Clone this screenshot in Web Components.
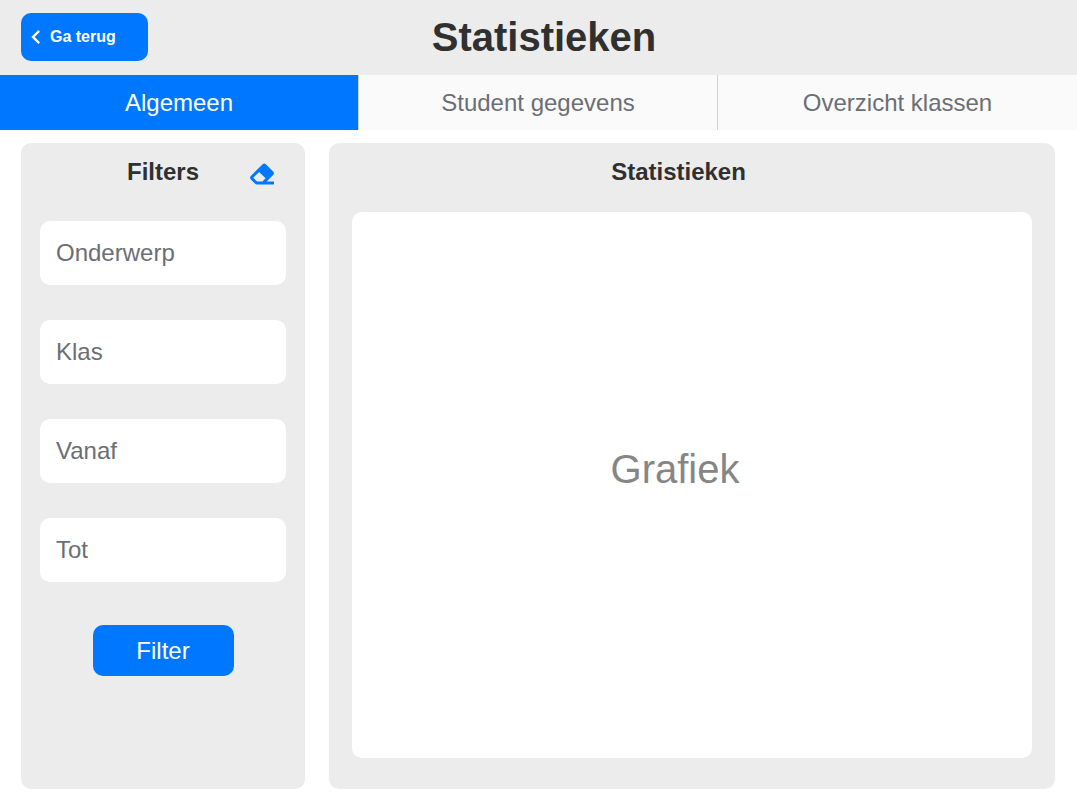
<!DOCTYPE html>
<html lang="nl">
<head>
<meta charset="utf-8">
<meta name="viewport" content="width=device-width, initial-scale=1">
<title>Statistieken</title>
<style>
  :root {
    --blue: #0077ff;
    --panel: #ececec;
    --ink: #303030;
    --muted: #6b6e74;
    --radius: 10px;
  }
  body {
    margin: 0;
    background: #fff;
    color: var(--ink);
    font-family: "Liberation Sans", Arial, sans-serif;
    font-size: 24px;
    line-height: 28px;
  }
</style>
</head>
<body>
<stats-page></stats-page>

<template id="stats-page">
  <style>
    :host { display: flex; flex-direction: column; min-height: 100vh; }
    main {
      flex: 1;
      display: grid;
      grid-template-columns: 284px 1fr;
      gap: 24px;
      padding: 13px 22px 19px 21px;
    }
  </style>
  <page-header>Statistieken</page-header>
  <tab-bar>
    <tab-item active>Algemeen</tab-item>
    <tab-item>Student gegevens</tab-item>
    <tab-item>Overzicht klassen</tab-item>
  </tab-bar>
  <main>
    <filter-panel>
      <filter-field label="Onderwerp"></filter-field>
      <filter-field label="Klas"></filter-field>
      <filter-field label="Vanaf"></filter-field>
      <filter-field label="Tot"></filter-field>
    </filter-panel>
    <chart-panel heading="Statistieken">Grafiek</chart-panel>
  </main>
</template>

<template id="page-header">
  <style>
    :host { display: block; background: var(--panel); }
    header {
      display: grid;
      grid-template-columns: 127px 1fr 127px;
      padding: 13px 10px 14px 21px;
    }
    h1 { margin: 0; font-size: 40px; line-height: 48px; text-align: center; }
    button {
      display: flex;
      align-items: center;
      height: 48px;
      padding: 0 1px;
      border: 0;
      border-radius: var(--radius);
      background: var(--blue);
      color: #fff;
      font: bold 16px/20px "Liberation Sans", Arial, sans-serif;
      cursor: pointer;
    }
    svg { width: 28px; height: 28px; fill: currentColor; }
  </style>
  <header>
    <button type="button">
      <svg viewBox="0 0 24 24" aria-hidden="true"><path d="M15.41 7.41L14 6l-6 6 6 6 1.41-1.41L10.83 12z"/></svg>
      <span>Ga terug</span>
    </button>
    <h1><slot></slot></h1>
  </header>
</template>

<template id="tab-bar">
  <style>
    nav { display: grid; grid-template-columns: repeat(3, 1fr); }
    :host { display: block; background: #fafafa; }
  </style>
  <nav><slot></slot></nav>
</template>

<template id="tab-item">
  <style>
    :host { display: block; border-right: 1px solid #d2d2d2; }
    :host(:last-child) { border-right: 0; }
    a {
      display: block;
      padding: 14px 0 13px;
      color: var(--muted);
      text-align: center;
      text-decoration: none;
    }
    :host([active]) a { background: var(--blue); color: #fff; }
  </style>
  <a href="#"><slot></slot></a>
</template>

<template id="filter-panel">
  <style>
    :host { display: block; padding: 15px 19px; border-radius: var(--radius); background: var(--panel); }
    form { display: flex; flex-direction: column; gap: 35px; }
    .head { display: grid; grid-template-columns: 1fr auto 1fr; align-items: end; }
    h2 { grid-column: 2; margin: 0; font-size: 24px; line-height: 28px; }
    button { border: 0; color: #fff; background: var(--blue); font: inherit; cursor: pointer; }
    .clear {
      justify-self: end;
      width: 24px;
      height: 24px;
      margin-right: 12px;
      padding: 0;
      background: none;
      color: var(--blue);
    }
    .clear svg { display: block; width: 24px; height: 24px; fill: currentColor; }
    .submit { align-self: center; width: 141px; height: 51px; margin-top: 8px; border-radius: var(--radius); }
  </style>
  <form>
    <div class="head">
      <h2>Filters</h2>
      <button class="clear" type="reset" aria-label="Filters wissen">
        <svg viewBox="0 0 512 512" aria-hidden="true"><path d="M497.941 273.941c18.745-18.745 18.745-49.137 0-67.882l-160-160c-18.745-18.745-49.136-18.746-67.883 0l-256 256c-18.745 18.745-18.745 49.137 0 67.882l96 96A48.004 48.004 0 0 0 144 480h356c6.627 0 12-5.373 12-12v-40c0-6.627-5.373-12-12-12H355.883l142.058-142.059zm-302.627-62.627l137.373 137.373L265.373 416H150.628l-80-80 124.686-124.686z"/></svg>
      </button>
    </div>
    <slot></slot>
    <button class="submit" type="button">Filter</button>
  </form>
</template>

<template id="filter-field">
  <style>
    :host { display: block; }
    input {
      display: block;
      box-sizing: border-box;
      width: 100%;
      height: 64px;
      padding: 0 16px;
      border: 0;
      border-radius: var(--radius);
      background: #fff;
      color: var(--ink);
      font: inherit;
    }
    input::placeholder { color: var(--muted); opacity: 1; }
  </style>
  <input type="text">
</template>

<template id="chart-panel">
  <style>
    :host {
      display: flex;
      flex-direction: column;
      gap: 26px;
      padding: 15px 23px 31px;
      border-radius: var(--radius);
      background: var(--panel);
    }
    h2 { margin: 0; padding-right: 27px; font-size: 24px; line-height: 28px; text-align: center; }
    .chart {
      flex: 1;
      display: flex;
      align-items: center;
      justify-content: center;
      padding: 0 34px 32px 0;
      border-radius: var(--radius);
      background: #fff;
      color: #868686;
      font-size: 40px;
      line-height: 48px;
    }
  </style>
  <h2></h2>
  <div class="chart"><slot></slot></div>
</template>

<script>
  class TemplateElement extends HTMLElement {
    constructor() {
      super();
      const template = document.getElementById(this.localName);
      this.attachShadow({ mode: "open" }).append(template.content.cloneNode(true));
    }
  }

  class FilterField extends TemplateElement {
    connectedCallback() {
      const input = this.shadowRoot.querySelector("input");
      const label = this.getAttribute("label");
      input.placeholder = label;
      input.setAttribute("aria-label", label);
    }
  }

  class FilterPanel extends TemplateElement {
    connectedCallback() {
      this.shadowRoot.querySelector("form").addEventListener("reset", () => {
        for (const field of this.querySelectorAll("filter-field")) {
          field.shadowRoot.querySelector("input").value = "";
        }
      });
    }
  }

  class TabBar extends TemplateElement {
    connectedCallback() {
      this.addEventListener("click", (event) => {
        const picked = event.target.closest("tab-item");
        if (!picked) return;
        event.preventDefault();
        for (const tab of this.children) tab.toggleAttribute("active", tab === picked);
      });
    }
  }

  class ChartPanel extends TemplateElement {
    connectedCallback() {
      this.shadowRoot.querySelector("h2").textContent = this.getAttribute("heading");
    }
  }

  customElements.define("filter-field", FilterField);
  customElements.define("filter-panel", FilterPanel);
  customElements.define("chart-panel", ChartPanel);
  customElements.define("tab-item", class extends TemplateElement {});
  customElements.define("tab-bar", TabBar);
  customElements.define("page-header", class extends TemplateElement {});
  customElements.define("stats-page", class extends TemplateElement {});
</script>
</body>
</html>
